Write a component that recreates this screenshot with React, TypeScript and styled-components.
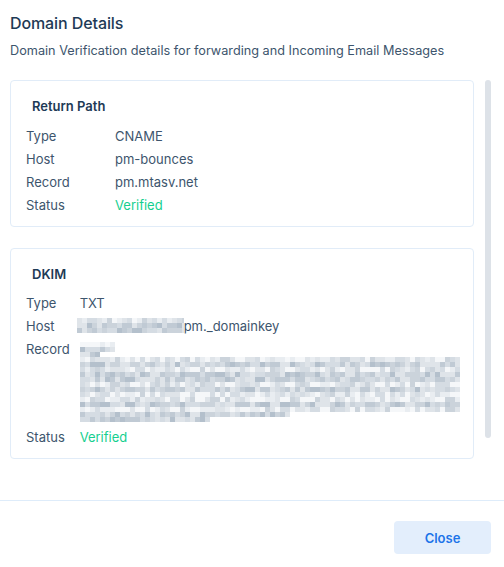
import React from 'react'
import styled, {createGlobalStyle} from 'styled-components'

const GlobalStyle = createGlobalStyle`
  html, body {
    margin: 0;
    padding: 0;
    background: #ffffff;
  }
  body {
    font-family: Inter, 'Noto Sans', 'Liberation Sans', sans-serif;
    color: #3a5068;
  }
`

const Modal = styled.div`
  width: 504px;
  height: 567px;
  display: flex;
  flex-direction: column;
  background: #fff;
`

const Header = styled.div`
  padding: 11px 13px 0 10px;
`

const Title = styled.h2`
  margin: 0;
  font-size: 16px;
  line-height: 24px;
  font-weight: 500;
  color: #1e3a56;
  letter-spacing: -0.1px;
`

const Subtitle = styled.p`
  margin: 7px 0 0;
  font-size: 12.7px;
  line-height: 18px;
  color: #3d556d;
`

const Body = styled.div`
  margin: 20px 13px 0 0;
  height: 420px;
  display: flex;
  align-items: flex-start;
  overflow: hidden;
`

const Stack = styled.div`
  flex: 1;
  min-width: 0;
  display: flex;
  flex-direction: column;
  gap: 21px;
  padding: 0 11px 0 10px;
`

const ScrollThumb = styled.div`
  width: 6px;
  height: 358px;
  border-radius: 3px;
  background: #dde2e8;
  flex-shrink: 0;
`

const Card = styled.section`
  border: 1px solid #e1ecf8;
  border-radius: 4px;
  padding: 15px 16px 9px 15px;
`

const CardTitle = styled.h3<{$gap?: number}>`
  margin: 0 0 ${(p) => p.$gap ?? 9}px 6px;
  font-size: 13px;
  line-height: 20px;
  font-weight: 600;
  color: #1e3a56;
`

const Rows = styled.div<{$labelWidth?: number}>`
  display: grid;
  grid-template-columns: ${(p) => (p.$labelWidth ? `${p.$labelWidth}px` : 'auto')} 1fr;
  column-gap: ${(p) => (p.$labelWidth ? 0 : 10)}px;
  font-size: 13px;
  line-height: 23px;
  color: #3d556d;
`

const Label = styled.div``

const Value = styled.div<{$ok?: boolean}>`
  color: ${(p) => (p.$ok ? '#16cf8f' : '#3d556d')};
  white-space: nowrap;
`

const Redacted = styled.span`
  display: inline-block;
  vertical-align: -2px;
  margin-left: -3px;
  line-height: 0;
`

const RecordBlock = styled.div`
  padding: 4px 0 4px;
  line-height: 0;
`

const Footer = styled.div`
  margin-top: auto;
  border-top: 1px solid #deecfa;
  padding: 20px 13px 13px;
  display: flex;
  justify-content: flex-end;
`

const Button = styled.button`
  width: 97px;
  height: 33px;
  border: none;
  border-radius: 4px;
  background: #e3eefc;
  color: #1d74e9;
  font-family: Inter, 'Noto Sans', 'Liberation Sans', sans-serif;
  font-size: 13px;
  font-weight: 600;
  cursor: pointer;
`

// deterministic noise for the pixelated (redacted) values
function makeRand(seed: number) {
  let s = seed
  return () => {
    s = (s * 9301 + 49297) % 233280
    return s / 233280
  }
}

const shades = ['#a7b5c3', '#b4c0cc', '#c0cad4', '#cbd3db', '#d5dce3', '#dfe4e9', '#e9edf1', '#f5f7f9']

function Mosaic({width, rows, seed}: {width: number; rows: number[]; seed: number}) {
  const rand = makeRand(seed)
  const cell = 5
  const cells: React.ReactNode[] = []
  rows.forEach((count, r) => {
    // text lines are darker in their middle band, lighter between lines
    const band = ((r * cell) % 13) / 13
    const base = band > 0.25 && band < 0.8 ? 0.15 : 0.45
    for (let c = 0; c < count; c++) {
      const v = Math.min(0.999, base + rand() * 0.6)
      const shade = shades[Math.floor(v * shades.length)]
      cells.push(<rect key={`${r}-${c}`} x={c * cell} y={r * cell} width={cell} height={cell} fill={shade} />)
    }
  })
  return (
    <svg width={width} height={rows.length * cell} viewBox={`0 0 ${width} ${rows.length * cell}`}>
      {cells}
    </svg>
  )
}

const recordRows = [7, 7, 4, 76, 76, 76, 76, 76, 76, 76, 76, 76, 76, 76, 42, 26]

export default function App() {
  return (
    <>
      <GlobalStyle />
      <Modal>
        <Header>
          <Title>Domain Details</Title>
          <Subtitle>Domain Verification details for forwarding and Incoming Email Messages</Subtitle>
        </Header>
        <Body>
          <Stack>
            <Card>
              <CardTitle>Return Path</CardTitle>
              <Rows $labelWidth={89}>
                <Label>Type</Label>
                <Value>CNAME</Value>
                <Label>Host</Label>
                <Value>pm-bounces</Value>
                <Label>Record</Label>
                <Value>pm.mtasv.net</Value>
                <Label>Status</Label>
                <Value $ok>Verified</Value>
              </Rows>
            </Card>
            <Card>
              <CardTitle $gap={8}>DKIM</CardTitle>
              <Rows>
                <Label>Type</Label>
                <Value>TXT</Value>
                <Label>Host</Label>
                <Value>
                  <Redacted>
                    <Mosaic width={107} rows={[22, 22, 22]} seed={7} />
                  </Redacted>
                  pm._domainkey
                </Value>
                <Label>Record</Label>
                <RecordBlock>
                  <Mosaic width={381} rows={recordRows} seed={42} />
                </RecordBlock>
                <Label>Status</Label>
                <Value $ok>Verified</Value>
              </Rows>
            </Card>
          </Stack>
          <ScrollThumb />
        </Body>
        <Footer>
          <Button>Close</Button>
        </Footer>
      </Modal>
    </>
  )
}
